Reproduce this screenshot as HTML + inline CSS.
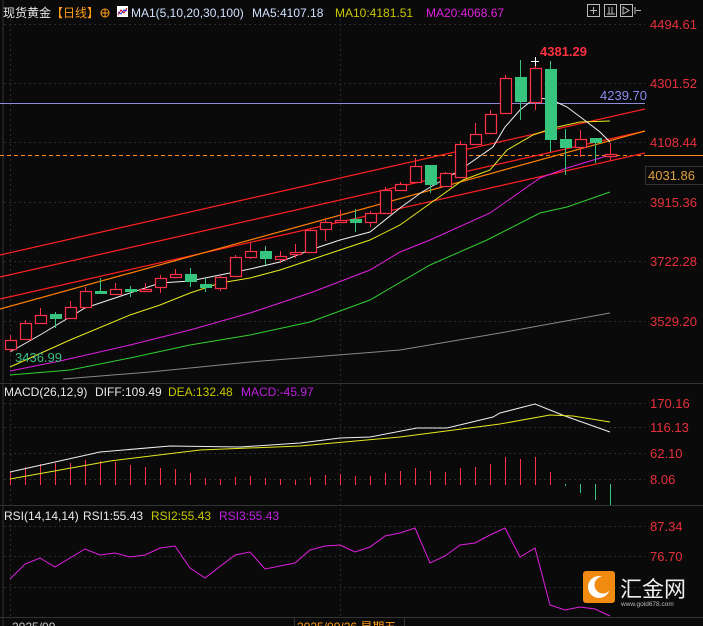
<!DOCTYPE html>
<html><head><meta charset="utf-8"><style>
html,body{margin:0;padding:0;background:#0a0a0a;width:703px;height:626px;overflow:hidden}
svg{display:block}
text{font-family:"Liberation Sans","Noto Sans CJK SC",sans-serif}
</style></head><body>
<svg width="703" height="626" viewBox="0 0 703 626" xmlns="http://www.w3.org/2000/svg" font-size="12">
<rect width="703" height="626" fill="#0a0a0a"/>
<line x1="3" y1="0" x2="3" y2="626" stroke="#333"/>
<line x1="0" y1="383.5" x2="703" y2="383.5" stroke="#333"/>
<line x1="0" y1="505.5" x2="703" y2="505.5" stroke="#333"/>
<line x1="0" y1="617.5" x2="703" y2="617.5" stroke="#333"/>
<g stroke="#2c2c2c" stroke-dasharray="2,3">
<line x1="4" y1="24.5" x2="645" y2="24.5"/>
<line x1="4" y1="83.5" x2="645" y2="83.5"/>
<line x1="4" y1="142.5" x2="645" y2="142.5"/>
<line x1="4" y1="202.5" x2="645" y2="202.5"/>
<line x1="4" y1="261.5" x2="645" y2="261.5"/>
<line x1="4" y1="321.5" x2="645" y2="321.5"/>
<line x1="4" y1="403.5" x2="645" y2="403.5"/>
<line x1="4" y1="427.5" x2="645" y2="427.5"/>
<line x1="4" y1="453.5" x2="645" y2="453.5"/>
<line x1="4" y1="479.5" x2="645" y2="479.5"/>
<line x1="4" y1="526.5" x2="645" y2="526.5"/>
<line x1="4" y1="556.5" x2="645" y2="556.5"/>
<line x1="4" y1="587.5" x2="645" y2="587.5"/>
<line x1="10.5" y1="14" x2="10.5" y2="617"/>
<line x1="340.5" y1="14" x2="340.5" y2="617"/>
</g>
<line x1="0" y1="103.5" x2="645" y2="103.5" stroke="#8c8cd8"/>
<line x1="0" y1="155.5" x2="645" y2="155.5" stroke="#ff8c1a" stroke-dasharray="4,3"/>
<line x1="645" y1="155.5" x2="703" y2="155.5" stroke="#ff8c1a"/>
<g stroke-width="1.2" fill="none">
<line x1="0" y1="255" x2="645" y2="109" stroke="#ff2020"/>
<line x1="0" y1="277" x2="645" y2="131" stroke="#ff2020"/>
<line x1="0" y1="299" x2="645" y2="153" stroke="#ff2020"/>
<line x1="0" y1="309" x2="645" y2="131" stroke="#ff8000"/>
</g>
<g fill="none" stroke-width="1">
<polyline stroke="#888" points="63,379 150,372 250,362 400,350 500,333 610,313"/>
<polyline stroke="#30d030" points="10,375 70,370 130,358 190,345 250,335 310,322 370,300 430,265 487,240 540,213 567,207 610,192"/>
<polyline stroke="#e020e0" points="10,371 60,361 130,345 190,330 250,313 310,293 370,270 400,252 430,240 490,213 520,192 540,178 567,168 610,155"/>
<polyline stroke="#e8e820" points="10,367 70,340 130,315 160,305 190,293 220,283 250,278 280,270 310,260 340,250 370,240 400,225 463,180 490,170 507,150 533,135 553,128 580,122 610,121"/>
<polyline stroke="#f0f0f0" points="10,352 40,335 85,308 160,283 190,281 220,275 250,269 280,262 310,250 340,240 370,232 400,208 422,192 460,170 493,147 505,127 520,110 535,98 550,99 567,107 587,122 600,132 610,142"/>
</g>
<!-- candles -->
<g stroke="#ff3048" stroke-width="1.2" fill="#0a0a0a">
<path fill="none" stroke-width="1" d="M10.5 335V352M25.5 320V340M40.5 308V324M70.5 301V319M85.5 287V307M115.5 283V295M145.5 283V292M160.5 275V293M175.5 269V278M220.5 276V291M235.5 255V276M250.5 243V259M280.5 251V263M295.5 244V258M310.5 229V252M325.5 218V241M340.5 210V223M370.5 211V227M385.5 187V213M400.5 182V191M415.5 158V183M445.5 172V187M460.5 141V178M475.5 123V145M490.5 110V134M505.5 75V114M535.5 58V110M580.5 130V157M610.5 143V161"/>
<rect x="5.5" y="340.5" width="11" height="9"/>
<rect x="20.5" y="323.5" width="11" height="16"/>
<rect x="35.5" y="315.5" width="11" height="8"/>
<rect x="65.5" y="307.5" width="11" height="11"/>
<rect x="80.5" y="291.5" width="11" height="16"/>
<rect x="110.5" y="289.5" width="11" height="5"/>
<rect x="140.5" y="289.5" width="11" height="2"/>
<rect x="155.5" y="278.5" width="11" height="9"/>
<rect x="170.5" y="274.5" width="11" height="3"/>
<rect x="215.5" y="277.5" width="11" height="11"/>
<rect x="230.5" y="257.5" width="11" height="19"/>
<rect x="245.5" y="251.5" width="11" height="6"/>
<rect x="275.5" y="256.5" width="11" height="3"/>
<rect x="290.5" y="252.5" width="11" height="2"/>
<rect x="305.5" y="230.5" width="11" height="22"/>
<rect x="320.5" y="222.5" width="11" height="7"/>
<rect x="335.5" y="220.5" width="11" height="2"/>
<rect x="365.5" y="213.5" width="11" height="9"/>
<rect x="380.5" y="190.5" width="11" height="23"/>
<rect x="395.5" y="184.5" width="11" height="6"/>
<rect x="410.5" y="166.5" width="11" height="16"/>
<rect x="440.5" y="173.5" width="11" height="13"/>
<rect x="455.5" y="144.5" width="11" height="33"/>
<rect x="470.5" y="134.5" width="11" height="10"/>
<rect x="485.5" y="114.5" width="11" height="19"/>
<rect x="500.5" y="78.5" width="11" height="35"/>
<rect x="530.5" y="68.5" width="11" height="34"/>
<rect x="575.5" y="139.5" width="11" height="8"/>
<rect x="605.5" y="154.5" width="11" height="2"/>
</g>
<g fill="#36c47e">
<path stroke="#36c47e" d="M55.5 312V328M100.5 278V294M130.5 286V297M190.5 268V287M205.5 278V292M265.5 246V265M355.5 209V232M430.5 165V193M520.5 60V120M550.5 61V152M565.5 129V175M595.5 138V163"/>
<rect x="50" y="314" width="12" height="5"/>
<rect x="95" y="291" width="12" height="3"/>
<rect x="125" y="289" width="12" height="3"/>
<rect x="185" y="274" width="12" height="8"/>
<rect x="200" y="284" width="12" height="4"/>
<rect x="260" y="251" width="12" height="8"/>
<rect x="350" y="219" width="12" height="4"/>
<rect x="425" y="165" width="12" height="20"/>
<rect x="515" y="77" width="12" height="25"/>
<rect x="545" y="69" width="12" height="71"/>
<rect x="560" y="139" width="12" height="9"/>
<rect x="590" y="138" width="12" height="5"/>
</g>
<path d="M531 61.5h8M535.5 57v9" stroke="#fff"/>
<text x="540" y="56" fill="#ff3040" font-weight="bold" font-size="13">4381.29</text>
<text x="15" y="362" fill="#3cbf88" font-size="13">3436.99</text>
<text x="600" y="100" fill="#8c8cf0" font-size="13">4239.70</text>
<g fill="#e8303c" font-size="13">
<text x="650" y="29">4494.61</text>
<text x="650" y="88">4301.52</text>
<text x="650" y="147">4108.44</text>
<text x="650" y="207">3915.36</text>
<text x="650" y="266">3722.28</text>
<text x="650" y="326">3529.20</text>
<text x="650" y="408">170.16</text>
<text x="650" y="432">116.13</text>
<text x="650" y="458">62.10</text>
<text x="650" y="484">8.06</text>
<text x="650" y="531">87.34</text>
<text x="650" y="561">76.70</text>
</g>
<rect x="645.5" y="166.5" width="58" height="18" fill="#0a0a0a" stroke="#333"/>
<text x="648" y="180" fill="#e0a040" font-size="13">4031.86</text>
<text x="3" y="17" fill="#e8e8e8">现货黄金</text>
<text x="51" y="17" fill="#ff9c1a">【日线】</text>
<circle cx="105" cy="13" r="4" fill="none" stroke="#ff9c1a"/>
<path d="M101 13h8M105 9v8" stroke="#ff9c1a"/>
<rect x="117" y="6" width="11" height="11" fill="#fff"/>
<path d="M118 15l3-5 3 3 3-5" stroke="#d00" fill="none"/>
<path d="M118 12l3 2 3-4 3 1" stroke="#22c" fill="none"/>
<text x="131" y="17" fill="#d0e0ff">MA1(5,10,20,30,100)</text>
<text x="252" y="17" fill="#d0e0ff">MA5:4107.18</text>
<text x="335" y="17" fill="#c8c800">MA10:4181.51</text>
<text x="426" y="17" fill="#e020e0">MA20:4068.67</text>
<g fill="none" stroke="#bbb">
<rect x="587.5" y="4.5" width="12" height="12"/>
<rect x="604.5" y="4.5" width="12" height="12"/>
<rect x="620.5" y="4.5" width="12" height="12"/>
<path d="M590 10.5h7M593.5 7v7M607 14h8M609 7v7M612 7v7M623 7v7l6-3.5z M635 7v7M636 10.5h5"/>
</g>
<text x="4" y="396" fill="#e8e8e8">MACD(26,12,9)</text>
<text x="95" y="396" fill="#e8e8e8">DIFF:109.49</text>
<text x="168" y="396" fill="#c8c800">DEA:132.48</text>
<text x="241" y="396" fill="#c020e0">MACD:-45.97</text>
<path stroke="#ff3048" d="M10.5 485V472M25.5 485V467M40.5 485V464M55.5 485V463M70.5 485V463M85.5 485V460M100.5 485V461M115.5 485V462M130.5 485V465M145.5 485V467M160.5 485V468M175.5 485V469M190.5 485V473M205.5 485V478M220.5 485V479M235.5 485V477M250.5 485V476M265.5 485V478M280.5 485V479M295.5 485V480M310.5 485V477M325.5 485V475M340.5 485V474M355.5 485V476M370.5 485V476M385.5 485V473M400.5 485V471M415.5 485V468M430.5 485V471M445.5 485V472M460.5 485V468M475.5 485V467M490.5 485V464M505.5 485V457M520.5 485V459M535.5 485V457M550.5 485V472"/>
<path stroke="#36c47e" d="M565.5 484V486M580.5 484V493M595.5 484V500M610.5 484V505"/>
<polyline fill="none" stroke="#f0f0f0" points="10,472 100,452 170,446 240,447 300,443 340,438 370,437 417,428 447,428 493,417 500,413 535,404 565,416 610,432"/>
<polyline fill="none" stroke="#e8e820" points="10,479 110,461 200,450 300,446 400,437 500,424 550,415 573,416 610,422"/>
<text x="4" y="520" fill="#e8e8e8">RSI(14,14,14)</text>
<text x="83" y="520" fill="#e8e8e8">RSI1:55.43</text>
<text x="151" y="520" fill="#c8c800">RSI2:55.43</text>
<text x="219" y="520" fill="#c020e0">RSI3:55.43</text>
<polyline fill="none" stroke="#e020e0" points="10,579 25,564 40,558 55,567 85,549 100,555 115,553 130,557 145,555 160,548 175,546 190,568 205,578 235,555 250,552 265,569 295,563 310,550 325,546 340,545 355,552 370,547 385,536 400,533 415,528 430,563 445,556 460,545 475,543 490,535 505,528 520,557 535,548 550,605 565,610 580,607 595,609 610,616"/>
<rect x="583" y="571" width="32" height="32" rx="3" fill="#f08a10"/>
<circle cx="599" cy="587" r="11" fill="#fff"/>
<circle cx="603" cy="585" r="8.5" fill="#f08a10"/>
<text x="620" y="597" fill="#eee" font-size="22">汇金网</text>
<text x="621" y="606" fill="#bbb" font-size="6.5">www.gold678.com</text>
<text x="12" y="631" fill="#c8c8c8">2025/09</text>
<rect x="294.5" y="617.5" width="110" height="12" fill="#0a0a0a" stroke="#333"/>
<text x="297" y="631" fill="#ff9c1a">2025/09/26 星期五</text>
</svg>
</body></html>
